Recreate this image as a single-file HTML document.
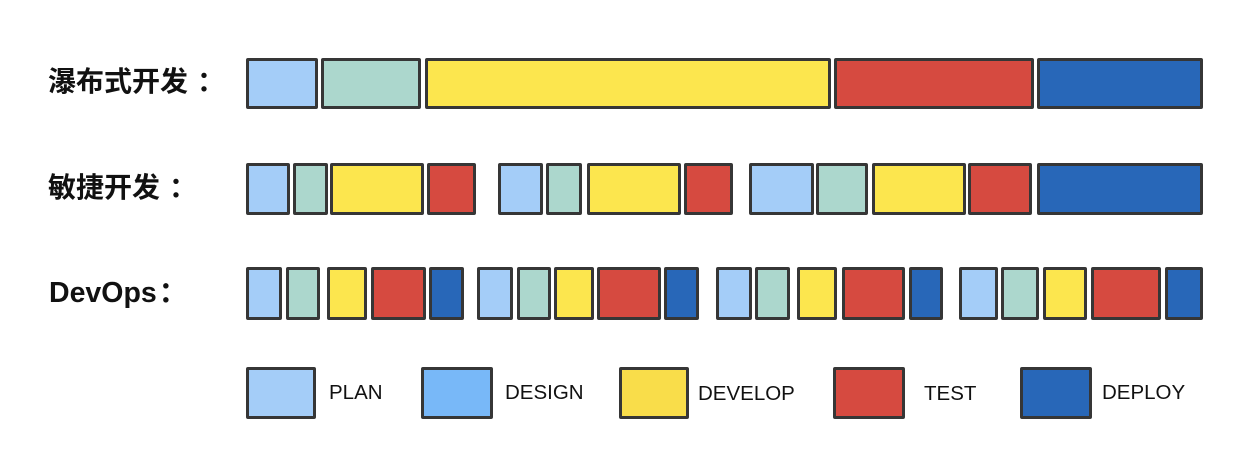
<!DOCTYPE html>
<html><head><meta charset="utf-8"><style>
body{margin:0;width:1252px;height:454px;background:#fff;position:relative;overflow:hidden;font-family:"Liberation Sans","Noto Sans CJK SC",sans-serif}
.b{position:absolute;box-sizing:border-box;border:3px solid #363636;border-radius:2px}
.l{position:absolute;font-weight:bold;font-size:28px;color:#111;line-height:32px;white-space:nowrap}
.l span{margin-left:9px}
.t{position:absolute;font-size:20.5px;color:#111;line-height:24px}
</style></head><body>
<div class="l" style="left:48px;top:66px">瀑布式开发<span>：</span></div>
<div class="l" style="left:48px;top:172px">敏捷开发<span>：</span></div>
<div class="l" style="left:49px;top:277px;font-size:28.5px">DevOps<span style="margin-left:2px">：</span></div>
<div id="c"></div>
<div class="t" style="left:329px;top:381px">PLAN</div>
<div class="t" style="left:505px;top:381px">DESIGN</div>
<div class="t" style="left:698px;top:382px">DEVELOP</div>
<div class="t" style="left:924px;top:382px">TEST</div>
<div class="t" style="left:1102px;top:381px">DEPLOY</div>
<script>
var C={p:'#a4cdf8',d:'#acd7cd',v:'#fce64e',t:'#d64a40',y:'#2867b8',D:'#78b8f8',V:'#f9dd4a'};
var rows=[
[58,109,[[246,318,'p'],[321,421,'d'],[425,831,'v'],[834,1034,'t'],[1037,1203,'y']]],
[163,215,[[246,290,'p'],[293,328,'d'],[330,424,'v'],[427,476,'t'],[498,543,'p'],[546,582,'d'],[587,681,'v'],[684,733,'t'],[749,814,'p'],[816,868,'d'],[872,966,'v'],[968,1032,'t'],[1037,1203,'y']]],
[267,320,[[246,282,'p'],[286,320,'d'],[327,367,'v'],[371,426,'t'],[429,464,'y'],[477,513,'p'],[517,551,'d'],[554,594,'v'],[597,661,'t'],[664,699,'y'],[716,752,'p'],[755,790,'d'],[797,837,'v'],[842,905,'t'],[909,943,'y'],[959,998,'p'],[1001,1039,'d'],[1043,1087,'v'],[1091,1161,'t'],[1165,1203,'y']]],
[367,419,[[246,316,'p'],[421,493,'D'],[619,689,'V'],[833,905,'t'],[1020,1092,'y']]]];
var h='';rows.forEach(function(r){r[2].forEach(function(b){h+='<div class="b" style="left:'+b[0]+'px;top:'+r[0]+'px;width:'+(b[1]-b[0])+'px;height:'+(r[1]-r[0])+'px;background:'+C[b[2]]+'"></div>';});});
document.getElementById('c').innerHTML=h;
</script>
</body></html>
